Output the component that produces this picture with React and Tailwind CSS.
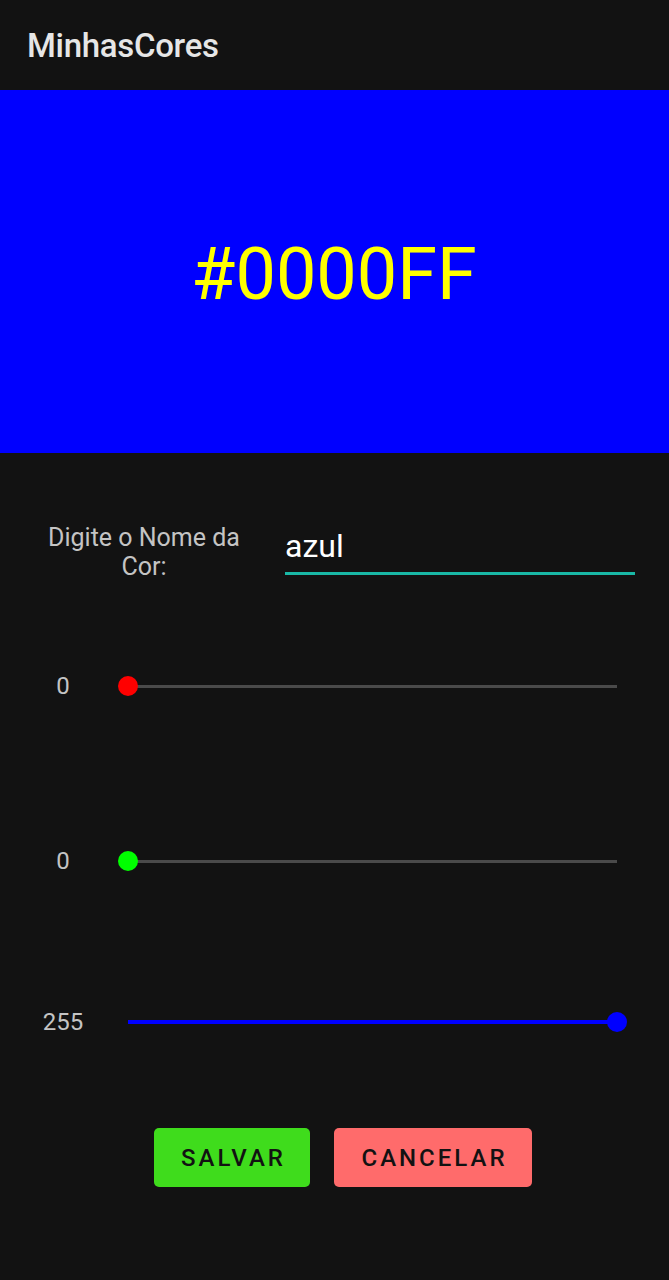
export default function App() {
  const font = { fontFamily: "Roboto, 'Noto Sans', sans-serif" };
  const Slider = ({ value, color, thumbColor }) => (
    <div className="relative h-[24px] flex-1 mr-[52px]">
      <div className="absolute left-0 right-0 top-[10.5px] h-[3px] bg-[#4a4a4a]" />
      <div
        className="absolute left-0 top-[10px] h-[4px]"
        style={{ width: `${(value / 255) * 100}%`, background: color }}
      />
      <div
        className="absolute top-[2px] h-[20px] w-[20px] -ml-[10px] rounded-full"
        style={{ left: `${(value / 255) * 100}%`, background: thumbColor }}
      />
    </div>
  );
  const Row = ({ label, children, className }) => (
    <div className={`flex items-center h-[24px] ${className}`}>
      <div className="w-[126px] text-center text-[24px] leading-[24px] text-[#c4c4c4]">{label}</div>
      <div className="flex-1 flex ml-[2px]">{children}</div>
    </div>
  );
  return (
    <div className="w-[669px] h-[1280px] bg-[#121212] flex flex-col" style={font}>
      <div className="h-[90px] flex items-center px-[27px]">
        <span className="text-[33px] leading-[33px] font-medium text-[#e6e6e6] tracking-[-0.3px]">MinhasCores</span>
      </div>
      <div className="h-[363px] bg-[#0000ff] flex items-center justify-center">
        <span className="text-[72px] text-[#ffff00] leading-none mt-[6px] -ml-[1px]">#0000FF</span>
      </div>
      <div className="flex items-start mt-[70px] h-[58px]">
        <div className="w-[285px] pl-[3px] text-center text-[25px] leading-[29px] text-[#c4c4c4]">
          Digite o Nome da<br />Cor:
        </div>
        <div className="w-[350px] flex flex-col">
          <div className="text-[32px] leading-[32px] text-white mt-[7px]">azul</div>
          <div className="h-[3px] bg-[#19b8a6] mt-[10px]" />
        </div>
      </div>
      <Row label="0" className="mt-[93px]">
        <Slider value={0} color="#4a4a4a" thumbColor="#ff0000" />
      </Row>
      <Row label="0" className="mt-[151px]">
        <Slider value={0} color="#4a4a4a" thumbColor="#00ff00" />
      </Row>
      <Row label="255" className="mt-[137px]">
        <Slider value={255} color="#0000ff" thumbColor="#0000ff" />
      </Row>
      <div className="flex justify-center gap-[24px] mt-[94px] pl-[16px]">
        <div className="w-[156px] h-[59px] rounded-[5px] bg-[#3fdc1c] flex items-center justify-center pl-[4px] text-[24px] font-medium tracking-[3px] text-[#121212]">
          SALVAR
        </div>
        <div className="w-[198px] h-[59px] rounded-[5px] bg-[#ff6b6b] flex items-center justify-center pl-[4px] text-[24px] font-medium tracking-[3px] text-[#121212]">
          CANCELAR
        </div>
      </div>
    </div>
  );
}
